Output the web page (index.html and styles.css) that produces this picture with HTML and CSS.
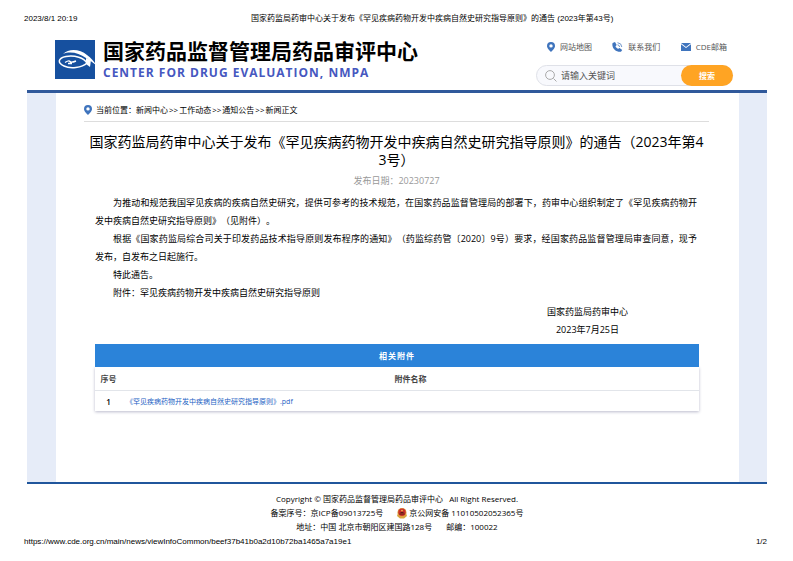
FILE: index.html
```html
<!DOCTYPE html>
<html lang="zh-CN">
<head>
<meta charset="utf-8">
<title>国家药监局药审中心通告</title>
<link rel="stylesheet" href="styles.css">
</head>
<body>
<div class="running running-top">
  <span>2023/8/1 20:19</span>
  <span class="doc-title">国家药监局药审中心关于发布《罕见疾病药物开发中疾病自然史研究指导原则》的通告 (2023年第43号)</span>
</div>

<div class="site">
  <header class="masthead">
    <div class="brand">
      <svg class="logo" viewBox="0 0 41 39" aria-hidden="true">
        <rect width="40" height="39" fill="#16509f"/>
        <path d="M8 14C14 8 25 9 32 15C36 18 39 21 41 25C37 22 35 20 31 18C24 13 15 11 8 14Z" fill="#fff"/>
        <path d="M32 23C27 28 15 29 9 26C2 23 3 18 11 16.500C20 15 29 18 32 23Z" fill="none" stroke="#fff" stroke-width="1.500"/>
        <path d="M10 22.500Q14 20 15 21.500T21 21M13 23.500H17" fill="none" stroke="#fff" stroke-width="1.400"/>
        <path d="M31 18L36 20L35 27L31 24Z" fill="#fff"/>
      </svg>
      <div>
        <div class="brand-cn">国家药品监督管理局药品审评中心</div>
        <div class="brand-en">CENTER FOR DRUG EVALUATION, NMPA</div>
      </div>
    </div>
    <div class="tools">
      <nav class="quick">
        <a href="#"><svg class="pin" viewBox="0 0 8 10" aria-hidden="true"><path fill-rule="evenodd" d="M4 0a4 4 0 0 1 4 4C8 6.500 5 9 4 10C3 9 0 6.500 0 4a4 4 0 0 1 4-4ZM4 2.200a1.700 1.700 0 1 0 0 3.400a1.700 1.700 0 1 0 0-3.400Z"/></svg>网站地图</a>
        <a href="#"><svg class="phone" viewBox="0 0 11 10" aria-hidden="true"><path d="M.6 1L3 0L4.700 3L3.500 4.200C4 5.500 5 6.300 6.300 6.800L7.600 5.900L10.200 8L9 9.800C4 10.500-.8 5.500 .6 1Z"/><path d="M5.500 2.800Q7.500 3 7.600 5M5.500 .7Q9.600 1 9.800 5" fill="none" stroke="#7196ca" stroke-width="1"/></svg>联系我们</a>
        <a href="#"><svg class="mail" viewBox="0 0 10 8" aria-hidden="true"><path d="M0 0H10L5 4Z"/><path d="M0 1.200L5 5L10 1.200V8H0Z"/></svg>CDE邮箱</a>
      </nav>
      <form class="search">
        <svg class="glass" viewBox="0 0 12 12" aria-hidden="true"><circle cx="5" cy="5" r="4.400"/><path d="M8.500 8.500L11.500 11.500"/></svg>
        <input type="text" placeholder="请输入关键词" aria-label="请输入关键词">
        <button type="button">搜索</button>
      </form>
    </div>
  </header>

  <div class="band">
    <main class="sheet">
      <nav class="crumbs">
        <svg class="pin" viewBox="0 0 8 10" aria-hidden="true"><path fill-rule="evenodd" d="M4 0a4 4 0 0 1 4 4C8 6.500 5 9 4 10C3 9 0 6.500 0 4a4 4 0 0 1 4-4ZM4 2.200a1.700 1.700 0 1 0 0 3.400a1.700 1.700 0 1 0 0-3.400Z"/></svg>
        <span>当前位置：<a href="#">新闻中心</a><i>&gt;&gt;</i><a href="#">工作动态</a><i>&gt;&gt;</i><a href="#">通知公告</a><i>&gt;&gt;</i><a href="#">新闻正文</a></span>
      </nav>
      <h1>国家药监局药审中心关于发布《罕见疾病药物开发中疾病自然史研究指导原则》的通告（2023年第43号）</h1>
      <p class="date">发布日期：20230727</p>
      <article class="copy">
        <p>为推动和规范我国罕见疾病的疾病自然史研究，提供可参考的技术规范，在国家药品监督管理局的部署下，药审中心组织制定了《罕见疾病药物开发中疾病自然史研究指导原则》（见附件）。</p>
        <p>根据《国家药监局综合司关于印发药品技术指导原则发布程序的通知》（药监综药管〔2020〕9号）要求，经国家药品监督管理局审查同意，现予<span class="keep">发布</span>，自发布之日起施行。</p>
        <p>特此通告。</p>
        <p>附件：罕见疾病药物开发中疾病自然史研究指导原则</p>
        <div class="sign">国家药监局药审中心<br>2023年7月25日</div>
      </article>
      <table class="files">
        <caption>相关附件</caption>
        <thead><tr><th class="num">序号</th><th>附件名称</th></tr></thead>
        <tbody><tr><td class="num">1</td><td><a href="#">《罕见疾病药物开发中疾病自然史研究指导原则》.pdf</a></td></tr></tbody>
      </table>
    </main>
  </div>

  <footer class="foot">
    <div>Copyright © 国家药品监督管理局药品审评中心 &nbsp; All Right Reserved.</div>
    <div class="record"><span>备案序号：京ICP备09013725号</span><span class="police"><svg viewBox="0 0 10 11" aria-hidden="true"><path d="M1 5L0 8L3 10.500H7L10 8L9 5Z" fill="#d9a441"/><circle cx="5" cy="4.500" r="4.500" fill="#e0a13c"/><circle cx="5" cy="4.300" r="3.700" fill="#c9302a"/><path d="M2.500 6H7.500M3.500 4.500H6.500" stroke="#5b1d18" stroke-width="1"/><circle cx="5" cy="2.600" r=".8" fill="#f4cf5c"/></svg>京公网安备 11010502052365号</span></div>
    <div class="record"><span>地址：中国 北京市朝阳区建国路128号</span><span>邮编：100022</span></div>
  </footer>
</div>

<div class="running running-bottom">
  <span>https://www.cde.org.cn/main/news/viewInfoCommon/beef37b41b0a2d10b72ba1465a7a19e1</span>
  <span>1/2</span>
</div>
</body>
</html>
```
FILE: styles.css
```css
* { box-sizing: border-box; }

body {
  margin: 0;
  padding: 12px 26px 0 24px;
  background: #fff;
  color: #000;
  font: 8px/14px "Open Sans", "Noto Sans CJK SC", sans-serif;
  text-spacing-trim: space-all;
}

a { color: inherit; text-decoration: none; }
h1, p { margin: 0; font-weight: 400; }
svg { flex: none; }

.running {
  display: flex;
  justify-content: space-between;
  font-family: "Liberation Sans", "Noto Sans CJK SC", sans-serif;
  line-height: 14px;
}
.doc-title { flex: 1; padding-left: 20px; text-align: center; }

.site { margin: 0 0 0 3px; }

.masthead {
  display: flex;
  justify-content: space-between;
  height: 64px;
  padding: 10px 34px 0 28px;
}
.brand { display: flex; gap: 7px; align-items: flex-start; }
.logo { display: block; width: 41px; height: 39px; margin-top: 4px; }
.brand-cn { font-size: 21px; line-height: 30px; font-weight: 700; }
.brand-en {
  font-size: 12px;
  line-height: 14px;
  font-weight: 700;
  letter-spacing: 1px;
  color: #4657c0;
}

.tools { width: 197px; padding-top: 4px; }
.quick {
  display: flex;
  justify-content: space-between;
  padding: 0 6px 0 11px;
  color: #555;
}
.quick a { display: flex; align-items: center; gap: 5px; }
.quick svg, .pin { fill: #3f74bd; }
.pin { width: 8px; height: 10px; }
.phone { width: 11px; height: 10px; }
.mail { width: 10px; height: 8px; }

.search {
  display: flex;
  align-items: center;
  height: 21px;
  margin-top: 11px;
  padding-left: 8px;
  border: 1px solid #dfe1e8;
  border-radius: 11px;
  background: #f8f9fd;
}
.glass { width: 12px; height: 12px; fill: none; stroke: #aaa; }
.search input {
  flex: 1;
  min-width: 0;
  padding: 0 4px;
  border: 0;
  outline: 0;
  background: none;
  font: inherit;
  font-size: 9px;
}
.search input::placeholder { color: #555; }
.search button {
  width: 52px;
  height: 21px;
  margin-right: -1px;
  padding: 0;
  border: 0;
  border-radius: 11px;
  background: #ffa423;
  color: #fff;
  font: inherit;
  font-weight: 700;
}

.band {
  padding: 0 28px 0 29px;
  border-top: 3px solid #30599b;
  border-bottom: 2px solid #20569c;
  background: #e6ecf8;
}
.sheet { min-height: 389px; padding: 8px 30px 0 28px; background: #fff; }

.crumbs {
  display: flex;
  align-items: center;
  gap: 4px;
  height: 21px;
  padding-bottom: 3px;
  border-bottom: 1px solid #ddd;
}
.crumbs i { padding: 0 1px; font-style: normal; }

h1 {
  padding: 0 4px;
  margin-top: 11px;
  font-size: 14px;
  line-height: 18px;
  text-align: center;
  word-break: break-all;
}
.date {
  margin: 4px 0 5px;
  font-size: 9px;
  line-height: 16px;
  text-align: center;
  color: #999;
}
.copy {
  padding: 0 12px 0 11px;
  font-size: 9px;
  line-height: 18px;
}
.copy p { text-indent: 2em; text-align: justify; }
.keep { white-space: nowrap; }
.sign { width: fit-content; margin: 1px 69px 0 auto; text-align: center; }

.files {
  width: calc(100% - 21px);
  margin: 5px 10px 0 11px;
  border-collapse: collapse;
  box-shadow: 0 1px 3px #bbc;
}
.files caption {
  background: #2b83d9;
  color: #fff;
  font-weight: 700;
  letter-spacing: 1px;
  line-height: 23px;
}
.files th { padding: 0; line-height: 23px; color: #444; border-bottom: 1px solid #e2e5ea; }
.files td { padding: 0 0 0 4px; line-height: 19px; }
.files .num { width: 27px; padding: 0; text-align: center; }
.files td.num { font-weight: 600; }
.files td a { font-size: 7px; color: #2462c4; }

.foot { padding-top: 8px; text-align: center; }
.record { display: flex; justify-content: center; gap: 14px; }
.police { display: flex; align-items: center; gap: 2px; }
.police svg { width: 10px; height: 11px; }

.running-bottom { margin-top: 1px; }
```
